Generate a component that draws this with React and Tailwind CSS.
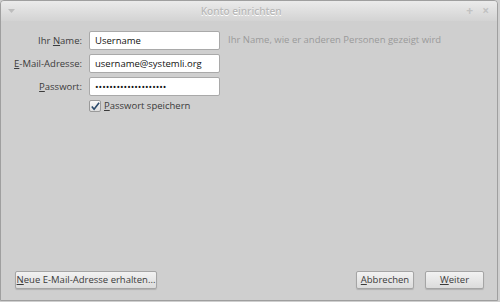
const font = { fontFamily: '"Open Sans", "DejaVu Sans", sans-serif' };

function Field({ label, ul, rest, value, type = "text" }) {
  return (
    <div className="flex items-center h-[19px]">
      <label className="w-[82px] text-right pr-[1px] text-[#3c3c3c] text-[9.5px] leading-none whitespace-nowrap">
        {label}<span className="underline">{ul}</span>{rest}
      </label>
      <input
        readOnly
        type={type}
        value={value}
        className="ml-[6px] w-[131px] h-[19px] bg-white border border-[#a9a9a9] rounded-[2px] px-[5px] text-[9.5px] font-medium text-[#111] outline-none"
        style={font}
      />
    </div>
  );
}

function Btn({ ul, rest, className = "" }) {
  return (
    <button
      className={"h-[18px] border border-[#a5a5a5] rounded-[2px] bg-gradient-to-b from-[#f2f2f2] to-[#dcdcdc] shadow-[0_1px_1px_rgba(0,0,0,0.15)] text-[9.5px] leading-none text-[#3a3a3a] flex items-center justify-center whitespace-nowrap " + className}
      style={font}
    >
      <span className="underline">{ul}</span>{rest}
    </button>
  );
}

export default function App() {
  return (
    <div className="w-[500px] h-[302px] bg-[#cfcfcf] flex flex-col" style={font}>
      <div className="flex-1 flex flex-col border border-[#9f9f9f] rounded-t-[4px] mr-[2px] mb-[1px] overflow-hidden">
        {/* title bar */}
        <div className="h-[20px] bg-gradient-to-b from-[#ebebeb] to-[#d3d3d3] flex items-center px-[6px]">
          <svg width="9" height="6" viewBox="0 0 9 6"><path d="M1 1 L8 1 L4.5 5 Z" fill="#bdbdbd" /></svg>
          <div className="flex-1 text-center text-[10px] font-semibold text-[#b8b8b8] [text-shadow:0_1px_0_#fff]">Konto einrichten</div>
          <div className="flex items-center gap-[9px] text-[12px] font-bold text-[#c2c2c2] leading-none mr-[2px]">
            <span>+</span>
            <span>×</span>
          </div>
        </div>

        {/* form */}
        <div className="flex-1 flex flex-col pt-[10px]">
          <div className="flex items-center">
            <Field label="Ihr " ul="N" rest="ame:" value="Username" />
            <span className="ml-[8px] text-[9.5px] text-[#9a9a9a] whitespace-nowrap">Ihr Name, wie er anderen Personen gezeigt wird</span>
          </div>
          <div className="mt-[4px]">
            <Field label="" ul="E" rest="-Mail-Adresse:" value="username@systemli.org" />
          </div>
          <div className="mt-[4px]">
            <Field label="" ul="P" rest="asswort:" value="xxxxxxxxxxxxxxxxxxxx" type="password" />
          </div>
          <div className="flex items-center ml-[88px] mt-[3px] h-[14px]">
            <div className="w-[12px] h-[12px] bg-gradient-to-b from-[#fafafa] to-[#dedede] border border-[#9a9a9a] rounded-[2px] flex items-center justify-center">
              <svg width="11" height="11" viewBox="0 0 11 11"><path d="M2 5.5 L4.5 8.5 L10 1.5" fill="none" stroke="#2b4a6b" strokeWidth="1.8" /></svg>
            </div>
            <span className="ml-[3px] text-[9.5px] text-[#3a3a3a]"><span className="underline">P</span>asswort speichern</span>
          </div>

          <div className="flex-1" />

          <div className="flex items-center mb-[11px] ml-[14px] mr-[13px]">
            <Btn ul="N" rest="eue E-Mail-Adresse erhalten..." className="w-[142px]" />
            <div className="flex-1" />
            <Btn ul="A" rest="bbrechen" className="w-[58px]" />
            <Btn ul="W" rest="eiter" className="w-[59px] ml-[11px]" />
          </div>
        </div>
      </div>
    </div>
  );
}
